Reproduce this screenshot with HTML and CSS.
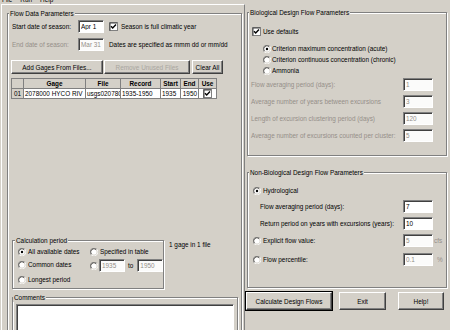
FILE: index.html
```html
<!DOCTYPE html>
<html>
<head>
<meta charset="UTF-8">
<title>Design Flow</title>
<link rel="stylesheet" href="styles.css">
</head>
<body>
<svg class="defs" width="0" height="0">
	<symbol id="radio-off" viewBox="0 0 12 12">
		<path d="M10.2 1.8A5.7 5.7 0 0 0 1.8 10.2" fill="none" stroke="#808080" stroke-width="1.2"/>
		<path d="M1.8 10.2A5.7 5.7 0 0 0 10.2 1.8" fill="none" stroke="#fff" stroke-width="1.2"/>
		<path d="M9 2.6A4.5 4.5 0 0 0 2.6 9" fill="none" stroke="#404040" stroke-width="1.2"/>
		<circle cx="6" cy="6" r="3.9" fill="#fff"/>
	</symbol>
	<symbol id="radio-on" viewBox="0 0 12 12">
		<use href="#radio-off"/>
		<circle cx="6" cy="6" r="1.8" fill="#000"/>
	</symbol>
	<symbol id="check-on" viewBox="0 0 9 9">
		<rect x="0.5" y="0.5" width="8" height="8" fill="#fff" stroke="#808080"/>
		<path d="M1 8.5V1H8" fill="none" stroke="#404040"/>
		<path d="M2 4.2L3.7 6L7 2.6" fill="none" stroke="#000" stroke-width="1.4"/>
	</symbol>
</svg>

<div class="menubar"><span>File</span><span>Run</span><span>Help</span></div>

<div class="window">
	<div class="pane-left">
		<div class="group group-flow">
			<span class="group-title">Flow Data Parameters</span>
			<div class="row row-start">
				<span class="row-label">Start date of season:</span>
				<input class="edit edit-date" type="text" value="Apr 1">
				<svg class="check"><use href="#check-on"/></svg>
				<span class="check-label">Season is full climatic year</span>
			</div>
			<div class="row row-end">
				<span class="row-label disabled">End date of season:</span>
				<input class="edit edit-date" type="text" value="Mar 31" disabled>
				<span class="note">Dates are specified as mmm dd or mm/dd</span>
			</div>
			<div class="button-row">
				<button class="btn btn-add">Add Gages From Files...</button>
				<button class="btn btn-remove" disabled>Remove Unused Files</button>
				<button class="btn btn-clear">Clear All</button>
			</div>
			<table class="grid">
				<colgroup>
					<col style="width:12px"><col style="width:62px"><col style="width:35px"><col style="width:40px"><col style="width:20px"><col style="width:18px"><col style="width:18px">
				</colgroup>
				<thead>
					<tr><th></th><th>Gage</th><th>File</th><th>Record</th><th>Start</th><th>End</th><th>Use</th></tr>
				</thead>
				<tbody>
					<tr>
						<th>01</th>
						<td>2078000 HYCO RIV</td>
						<td>usgs020780</td>
						<td>1935-1950</td>
						<td>1935</td>
						<td class="num">1950</td>
						<td class="use"><svg class="check"><use href="#check-on"/></svg></td>
					</tr>
				</tbody>
			</table>

			<div class="calc-row">
				<div class="group group-calc">
					<span class="group-title">Calculation period</span>
					<div class="calc-grid">
						<div class="opt"><svg class="radio"><use href="#radio-on"/></svg><span>All available dates</span></div>
						<div class="opt"><svg class="radio"><use href="#radio-off"/></svg><span>Specified in table</span></div>
						<div class="opt"><svg class="radio"><use href="#radio-off"/></svg><span>Common dates</span></div>
						<div class="opt opt-range">
							<svg class="radio"><use href="#radio-off"/></svg>
							<input class="edit edit-year" type="text" value="1935" disabled>
							<span class="to">to</span>
							<input class="edit edit-year" type="text" value="1950" disabled>
						</div>
						<div class="opt"><svg class="radio"><use href="#radio-off"/></svg><span>Longest period</span></div>
					</div>
				</div>
				<span class="gage-count">1 gage in 1 file</span>
			</div>

			<div class="group group-comments">
				<span class="group-title">Comments</span>
				<div class="memo"></div>
			</div>
		</div>
	</div>

	<div class="pane-right">
		<div class="group group-bio">
			<span class="group-title">Biological Design Flow Parameters</span>
			<div class="opt opt-defaults"><svg class="check"><use href="#check-on"/></svg><span>Use defaults</span></div>
			<div class="opt opt-crit first"><svg class="radio"><use href="#radio-on"/></svg><span>Criterion maximum concentration (acute)</span></div>
			<div class="opt opt-crit"><svg class="radio"><use href="#radio-off"/></svg><span>Criterion continuous concentration (chronic)</span></div>
			<div class="opt opt-crit"><svg class="radio"><use href="#radio-off"/></svg><span>Ammonia</span></div>
			<div class="param first">
				<span class="param-label disabled">Flow averaging period (days):</span>
				<input class="edit edit-param" type="text" value="1" disabled>
			</div>
			<div class="param">
				<span class="param-label disabled">Average number of years between excursions</span>
				<input class="edit edit-param" type="text" value="3" disabled>
			</div>
			<div class="param">
				<span class="param-label disabled">Length of excursion clustering period (days)</span>
				<input class="edit edit-param" type="text" value="120" disabled>
			</div>
			<div class="param">
				<span class="param-label disabled">Average number of excursions counted per cluster:</span>
				<input class="edit edit-param" type="text" value="5" disabled>
			</div>
		</div>

		<div class="group group-nonbio">
			<span class="group-title">Non-Biological Design Flow Parameters</span>
			<div class="opt opt-hydro"><svg class="radio"><use href="#radio-on"/></svg><span>Hydrological</span></div>
			<div class="param sub first">
				<span class="param-label">Flow averaging period (days):</span>
				<input class="edit edit-param" type="text" value="7">
			</div>
			<div class="param sub">
				<span class="param-label">Return period on years with excursions (years):</span>
				<input class="edit edit-param" type="text" value="10">
			</div>
			<div class="param radio-param">
				<svg class="radio"><use href="#radio-off"/></svg>
				<span class="param-label">Explicit flow value:</span>
				<input class="edit edit-param" type="text" value="5" disabled>
				<span class="unit disabled">cfs</span>
			</div>
			<div class="param radio-param last">
				<svg class="radio"><use href="#radio-off"/></svg>
				<span class="param-label">Flow percentile:</span>
				<input class="edit edit-param" type="text" value="0.1" disabled>
				<span class="unit unit-pct disabled">%</span>
			</div>
		</div>

		<div class="actions">
			<button class="btn btn-default">Calculate Design Flows</button>
			<button class="btn btn-exit">Exit</button>
			<button class="btn btn-help">Help!</button>
		</div>
	</div>
</div>
</body>
</html>
```
FILE: styles.css
```css
body{
	margin:0;
	width:450px;
	height:330px;
	overflow:hidden;
	background:#d4d0c8;
	font:6.4px/9px "Liberation Sans",Arial,sans-serif;
	color:#000;
}
.defs{position:absolute;}
.disabled{color:#948f88;}

.menubar{height:4px;overflow:hidden;display:flex;padding-left:2px;}
.menubar span{margin-top:-4px;line-height:8px;}
.menubar span+span{margin-left:8px;}

.window{display:flex;height:326px;padding-left:1px;}

/* panes */
.pane-left{
	width:244px;
	height:340px;
	flex:none;
	box-sizing:border-box;
	border:1px solid;
	border-color:#fff #808080 #808080 #fff;
	padding:8px 2px 0 5px;
}
.pane-right{
	display:flex;
	flex-direction:column;
	padding-left:2px;
	width:203px;
}

/* etched group box */
.group{
	display:flex;
	flex-direction:column;
	box-sizing:border-box;
	border:1px solid #808080;
	box-shadow:inset 1px 1px 0 #fff,1px 1px 0 #fff;
	padding:0 4px;
}
.group-title{
	align-self:flex-start;
	margin:-5px 0 0 -3px;
	padding:0 1px;
	height:9px;
	background:#d4d0c8;
	white-space:nowrap;
}

/* controls */
.edit{
	box-sizing:border-box;
	height:13px;
	margin:0;
	padding:0 0 0 2px;
	font:inherit;
	color:#000;
	background:#fff;
	border:1px solid;
	border-color:#808080 #fff #fff #808080;
	box-shadow:inset 1px 1px 0 #404040;
	outline:none;
}
.edit:disabled{color:#948f88;background:#fbfbfa;}
.check{width:9px;height:9px;flex:none;}
.radio{width:8px;height:8px;flex:none;}
.btn{
	box-sizing:border-box;
	margin:0;
	padding:0;
	height:14px;
	font:inherit;
	color:#000;
	background:#d4d0c8;
	border:1px solid;
	border-color:#fff #404040 #404040 #fff;
	box-shadow:inset -1px -1px 0 #808080;
	white-space:nowrap;
}
.btn:disabled{color:#a9a69f;}

/* flow data */
.group-flow{height:330px;}
.row{display:flex;align-items:center;height:13px;}
.row-start{margin-top:2px;}
.row-end{margin-top:5px;}
.row-label{width:66px;flex:none;white-space:nowrap;}
.edit-date{width:26px;}
.row .check{margin-left:5px;}
.check-label{margin-left:3px;white-space:nowrap;}
.note{margin-left:5px;white-space:nowrap;}

.button-row{display:flex;margin:9px 0 0 -1px;}
.btn-add{width:92px;}
.btn-remove{width:86px;margin-left:1px;}
.btn-clear{width:31px;margin-left:2px;}

.grid{
	margin:4px 0 0 -1px;
	border-collapse:collapse;
	table-layout:fixed;
	width:205px;
	border-top:1px solid #404040;
}
.grid th,.grid td{
	height:9px;
	padding:0 1px;
	white-space:nowrap;
	overflow:hidden;
	border:1px solid #808080;
	line-height:8px;
}
.grid thead th{font-weight:bold;text-align:center;}
.grid tbody th{font-weight:normal;background:#d4d0c8;}
.grid td{background:#fff;}
.grid td.num{text-align:right;}
.grid td.use{text-align:center;}
.grid td.use .check{vertical-align:top;}

.calc-row{display:flex;align-items:flex-start;margin-top:141px;}
.group-calc{width:152px;padding:0 4px 3px 5px;}
.calc-grid{display:grid;grid-template-columns:72px 1fr;row-gap:2px;margin-top:1px;}
.opt{display:flex;align-items:center;height:11px;white-space:nowrap;}
.opt .radio+span{margin-left:2px;}
.opt-range{height:13px;}
.edit-year{width:26px;margin-left:1px;}
.to{margin:0 3px;}
.gage-count{margin:0 0 0 5px;white-space:nowrap;}

.group-comments{width:226px;margin-top:8px;padding:0 3px;height:60px;}
.memo{
	margin-top:2px;
	height:50px;
	background:#fff;
	border:1px solid;
	border-color:#808080 #fff #fff #808080;
	box-shadow:inset 1px 1px 0 #404040;
}

/* right side */
.group-bio{width:200px;height:144px;margin-top:8px;}
.opt-defaults{height:9px;margin-top:10px;}
.opt-defaults span{margin-left:2px;}
.opt-crit{height:9px;margin:2px 0 0 11px;}
.opt-crit.first{margin-top:8px;}
.opt-crit .radio+span{margin-left:1px;}
.param{display:flex;align-items:center;height:13px;margin-top:4px;white-space:nowrap;}
.param.first{margin-top:3px;}
.param-label{width:152px;margin-left:-1px;flex:none;}
.edit-param{width:30px;}

.group-nonbio{width:200px;height:116px;margin-top:16px;}
.opt-hydro{height:9px;margin:9px 0 0 1px;}
.opt-hydro .radio+span{margin-left:2px;}
.param.sub.first{margin-top:5px;}
.param.sub .param-label{width:143px;margin-left:8px;}
.radio-param .radio{margin-left:1px;}
.radio-param .param-label{width:140px;margin-left:2px;}
.radio-param.last{margin-top:6px;}
.unit{margin-left:1px;}
.unit-pct{margin-left:4px;}

.actions{display:flex;margin:4px 0 0 -1px;}
.actions .btn{height:18px;}
.btn-default{width:86px;outline:1px solid #000;outline-offset:0;}
.btn-exit{width:47px;margin-left:7px;}
.btn-help{width:46px;margin-left:12px;}
```
